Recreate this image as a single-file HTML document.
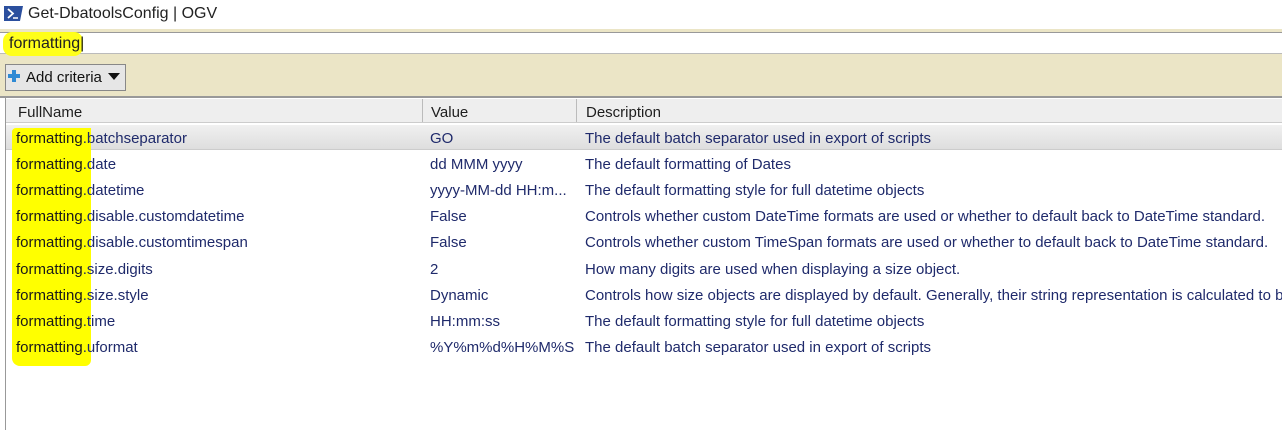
<!DOCTYPE html>
<html><head><style>
body{margin:0;width:1282px;height:430px;overflow:hidden;background:#fff;font-family:"Liberation Sans",sans-serif;font-size:15px;color:#1e1e1e;position:relative}
.a{position:absolute}
.row{position:absolute;left:6px;width:1276px;height:26px}
.row span{position:absolute;top:3px;color:#1f2a6b;white-space:nowrap}
.row span b{font-weight:normal;color:#1a1a1a}
</style></head><body>
<svg class="a" style="left:4px;top:6px" width="19" height="15"><polygon points="0,0 19,0 16,15 -3,15" fill="#2b4f9e"/><path d="M4 3 L9 7.5 L4 12" stroke="#fff" stroke-width="1.8" fill="none"/><path d="M9 12 H14" stroke="#fff" stroke-width="1.5"/></svg>
<div class="a" style="left:28px;top:5px;font-size:16px;color:#222">Get-DbatoolsConfig | OGV</div>
<div class="a" style="left:0;top:29px;width:1282px;height:67px;background:#ebe5c6"></div>
<div class="a" style="left:0;top:32px;width:1282px;height:20px;background:#fff;border-top:1px solid #999;border-bottom:1px solid #bbb"></div>
<div class="a" style="left:3px;top:32px;width:80px;height:24px;background:#ffff1a;border-radius:9px"></div>
<div class="a" style="left:9px;top:35px;font-size:16px;color:#222">formatting|</div>
<div class="a" style="left:5px;top:64px;width:119px;height:25px;background:#e6e6e6;border:1px solid #888"></div>
<svg class="a" style="left:8px;top:70px" width="12" height="12"><path d="M4 0h4v4h4v4h-4v4h-4v-4h-4v-4h4z" fill="#2f8ad4"/></svg>
<div class="a" style="left:26px;top:69px;font-size:15px;color:#111">Add criteria</div>
<svg class="a" style="left:108px;top:73px" width="12" height="7"><path d="M0 0h12l-6 7z" fill="#111"/></svg>
<div class="a" style="left:0;top:96px;width:1282px;height:2px;background:#999"></div>
<div class="a" style="left:5px;top:98px;width:1px;height:332px;background:#999"></div>
<div class="a" style="left:6px;top:99px;width:1276px;height:23px;background:#eee;border-bottom:1px solid #ccc"></div>
<div class="a" style="left:422px;top:99px;width:1px;height:23px;background:#bbb"></div>
<div class="a" style="left:576px;top:99px;width:1px;height:23px;background:#bbb"></div>
<div class="a" style="left:18px;top:104px">FullName</div>
<div class="a" style="left:431px;top:104px">Value</div>
<div class="a" style="left:586px;top:104px">Description</div>
<div class="a" style="left:6px;top:125px;width:1276px;height:24px;background:linear-gradient(#f0f0f0,#dedede);border-bottom:1px solid #ccc"></div>
<div class="a" style="left:12px;top:128px;width:79px;height:238px;background:#ffff00;border-radius:4px 0 6px 8px"></div>
<div class="row" style="top:127px"><span style="left:10px"><b>formatting</b>.batchseparator</span><span style="left:424px">GO</span><span style="left:579px">The default batch separator used in export of scripts</span></div>
<div class="row" style="top:153px"><span style="left:10px"><b>formatting</b>.date</span><span style="left:424px">dd MMM yyyy</span><span style="left:579px">The default formatting of Dates</span></div>
<div class="row" style="top:179px"><span style="left:10px"><b>formatting</b>.datetime</span><span style="left:424px">yyyy-MM-dd HH:m...</span><span style="left:579px">The default formatting style for full datetime objects</span></div>
<div class="row" style="top:205px"><span style="left:10px"><b>formatting</b>.disable.customdatetime</span><span style="left:424px">False</span><span style="left:579px">Controls whether custom DateTime formats are used or whether to default back to DateTime standard.</span></div>
<div class="row" style="top:231px"><span style="left:10px"><b>formatting</b>.disable.customtimespan</span><span style="left:424px">False</span><span style="left:579px">Controls whether custom TimeSpan formats are used or whether to default back to DateTime standard.</span></div>
<div class="row" style="top:258px"><span style="left:10px"><b>formatting</b>.size.digits</span><span style="left:424px">2</span><span style="left:579px">How many digits are used when displaying a size object.</span></div>
<div class="row" style="top:284px"><span style="left:10px"><b>formatting</b>.size.style</span><span style="left:424px">Dynamic</span><span style="left:579px">Controls how size objects are displayed by default. Generally, their string representation is calculated to be</span></div>
<div class="row" style="top:310px"><span style="left:10px"><b>formatting</b>.time</span><span style="left:424px">HH:mm:ss</span><span style="left:579px">The default formatting style for full datetime objects</span></div>
<div class="row" style="top:336px"><span style="left:10px"><b>formatting</b>.uformat</span><span style="left:424px">%Y%m%d%H%M%S</span><span style="left:579px">The default batch separator used in export of scripts</span></div>
</body></html>
